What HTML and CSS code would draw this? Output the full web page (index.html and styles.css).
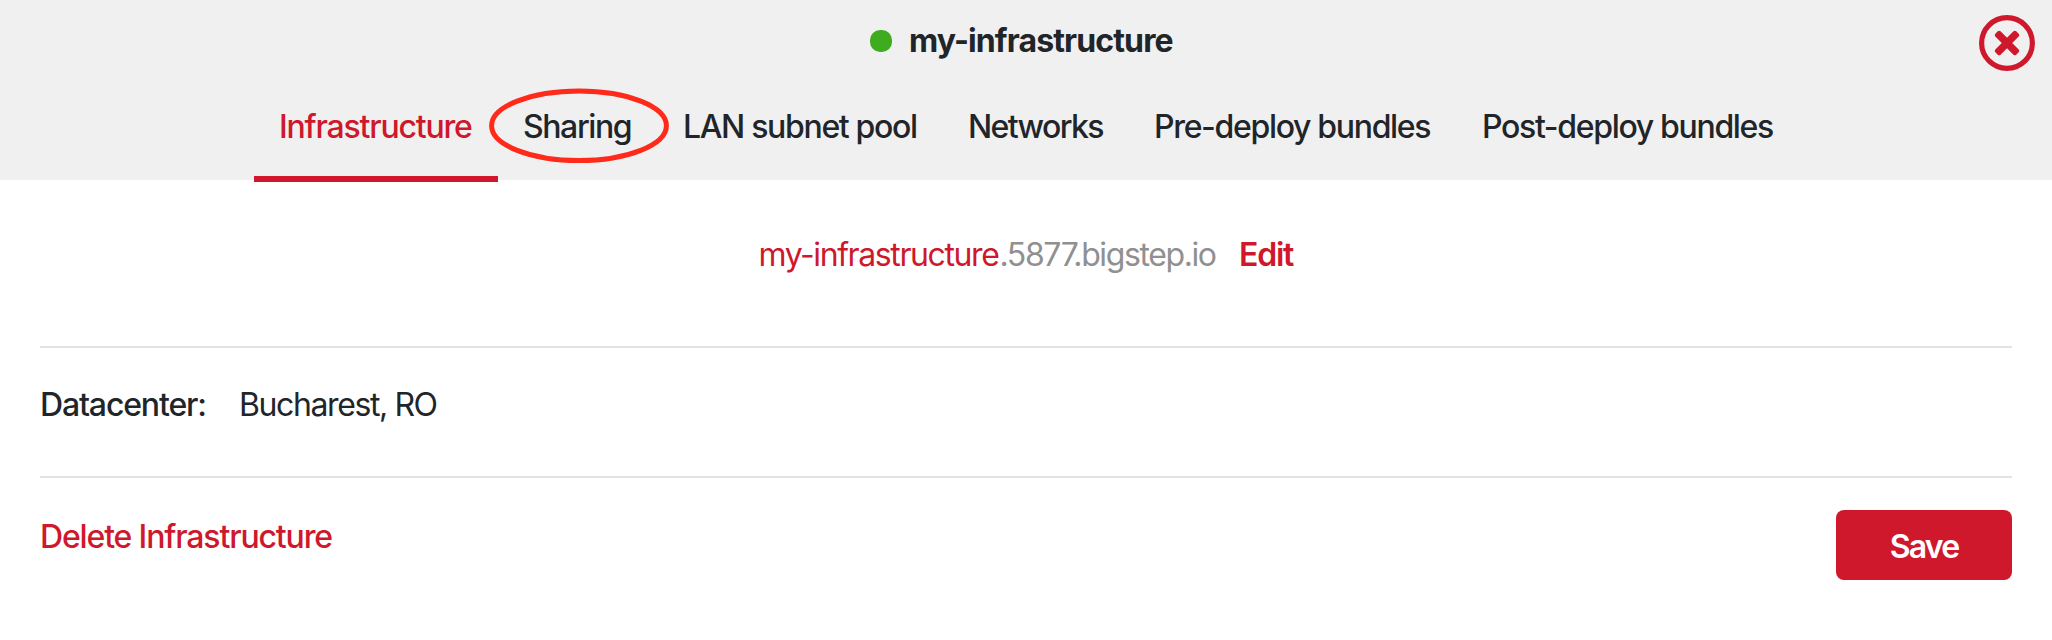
FILE: index.html
```html
<!DOCTYPE html>
<html lang="en">
<head>
<meta charset="utf-8">
<title>my-infrastructure</title>
<link rel="stylesheet" href="styles.css">
</head>
<body>
<header class="header">
  <div class="title-row">
    <span class="status"></span>
    <h1 class="title">my-infrastructure</h1>
    <button class="close" aria-label="Close">
      <svg width="56" height="56" viewBox="0 0 56 56"><circle cx="28" cy="28" r="25.4" fill="none" stroke="#cf182b" stroke-width="5.2"/><g fill="#cf182b" transform="rotate(45 28 28)"><rect x="13.2" y="24.3" width="29.6" height="7.4" rx="2"/><rect x="24.3" y="13.2" width="7.4" height="29.6" rx="2"/></g></svg>
    </button>
  </div>
  <nav class="tabs">
    <a class="tab tab-infrastructure active">Infrastructure</a>
    <a class="tab tab-sharing">Sharing<svg class="highlight" width="180" height="75" viewBox="0 0 180 75"><ellipse cx="90" cy="37.7" rx="87.4" ry="34.8" fill="none" stroke="#ff2a1a" stroke-width="5"/></svg></a>
    <a class="tab tab-lan">LAN subnet pool</a>
    <a class="tab tab-networks">Networks</a>
    <a class="tab tab-pre">Pre-deploy bundles</a>
    <a class="tab tab-post">Post-deploy bundles</a>
  </nav>
</header>
<main class="content">
  <section class="domain">
    <span class="name">my-infrastructure</span><span class="suffix">.5877.bigstep.io</span><a class="edit">Edit</a>
  </section>
  <section class="datacenter">
    <span class="label">Datacenter:</span><span class="value">Bucharest, RO</span>
  </section>
  <footer class="actions">
    <a class="delete">Delete Infrastructure</a>
    <button class="save">Save</button>
  </footer>
</main>
</body>
</html>
```
FILE: styles.css
```css
* { box-sizing: border-box; }
body {
  margin: 0;
  background: #fff;
  color: #212529;
  font: 400 32px/48px Inter, "Liberation Sans", sans-serif;
  letter-spacing: -1.4px;
  white-space: nowrap;
}
button { border: 0; padding: 0; font: inherit; letter-spacing: inherit; }
.header { height: 180px; background: #f0f0f0; }
.title-row { position: relative; display: flex; height: 88px; padding: 17px 0 0 870px; }
.status { width: 22px; height: 22px; margin: 13px 17px 0 0; border-radius: 10px; background: #3fab1e; }
.title { margin: 0; font-size: 32px; font-weight: 700; letter-spacing: -0.87px; }
.close { position: absolute; top: 15px; right: 17px; width: 56px; height: 56px; background: none; }
.close svg { display: block; }
.tabs { display: flex; height: 94px; padding-left: 254px; font-weight: 500; }
.tab { position: relative; padding: 15px 0 0 25px; letter-spacing: -1.33px; }
.active { color: #cf182b; border-bottom: 6px solid #cf182b; }
.tab-infrastructure { width: 244px; letter-spacing: -1.2px; }
.tab-sharing { width: 160px; letter-spacing: -1.4px; }
.tab-lan { width: 285px; }
.tab-networks { width: 186px; letter-spacing: -1.6px; }
.tab-pre { width: 328px; }
.tab-post { width: 340px; }
.highlight { position: absolute; left: -9px; top: 0; }
.content { padding: 0 40px; }
.domain { display: flex; height: 168px; padding: 51px 0 0 718.5px; border-bottom: 2px solid #e3e3e3; }
.name { width: 241px; color: #cf182b; }
.suffix { width: 239.5px; color: #909090; }
.edit { color: #cf182b; font-weight: 600; letter-spacing: -1.2px; }
.datacenter { display: flex; height: 130px; padding-top: 33px; border-bottom: 2px solid #e3e3e3; }
.label { width: 199px; font-weight: 500; letter-spacing: -1.15px; }
.actions { display: flex; justify-content: space-between; padding-top: 32px; }
.delete { padding-top: 3px; color: #cf182b; font-weight: 500; letter-spacing: -1.15px; }
.save { width: 176px; height: 70px; border-radius: 8px; background: #cf182b; color: #fff; font-weight: 600; padding-top: 3px; letter-spacing: -1.8px; }
```
